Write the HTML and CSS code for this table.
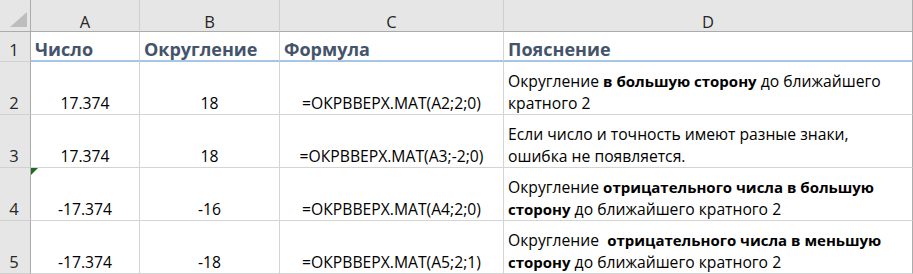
FILE: index.html
```html
<!DOCTYPE html>
<html lang="ru">
<head>
<meta charset="utf-8">
<title>ОКРВВЕРХ.МАТ</title>
<link rel="stylesheet" href="styles.css">
</head>
<body>
<div class="sheet">
  <div class="corner"><svg class="corner-tri" width="17" height="15" viewBox="0 0 17 15"><polygon points="17,0 17,15 0,15" fill="#bdbdbd"/></svg></div>
  <div class="colhead">A</div>
  <div class="colhead">B</div>
  <div class="colhead">C</div>
  <div class="colhead">D</div>

  <div class="rowhead">1</div>
  <div class="cell head">Число</div>
  <div class="cell head">Округление</div>
  <div class="cell head">Формула</div>
  <div class="cell head">Пояснение</div>

  <div class="rowhead">2</div>
  <div class="cell num">17.374</div>
  <div class="cell num">18</div>
  <div class="cell num">=ОКРВВЕРХ.МАТ(A2;2;0)</div>
  <div class="cell text"><p class="wrap">Округление <b>в большую сторону</b> до ближайшего<br>кратного 2</p></div>

  <div class="rowhead">3</div>
  <div class="cell num">17.374</div>
  <div class="cell num">18</div>
  <div class="cell num">=ОКРВВЕРХ.МАТ(A3;-2;0)</div>
  <div class="cell text"><p class="wrap">Если число и точность имеют разные знаки,<br>ошибка не появляется.</p></div>

  <div class="rowhead">4</div>
  <div class="cell num flagged"><span class="flag"></span>-17.374</div>
  <div class="cell num">-16</div>
  <div class="cell num">=ОКРВВЕРХ.МАТ(A4;2;0)</div>
  <div class="cell text"><p class="wrap">Округление <b>отрицательного числа в большую</b><br><b>сторону</b> до ближайшего кратного 2</p></div>

  <div class="rowhead">5</div>
  <div class="cell num">-17.374</div>
  <div class="cell num">-18</div>
  <div class="cell num">=ОКРВВЕРХ.МАТ(A5;2;1)</div>
  <div class="cell text"><p class="wrap">Округление&nbsp; <b>отрицательного числа в меньшую</b><br><b>сторону</b> до ближайшего кратного 2</p></div>
</div>
</body>
</html>
```

FILE: styles.css
```css
html, body {
  margin: 0;
  padding: 0;
  background: #ffffff;
}

.sheet {
  display: grid;
  grid-template-columns: 31px 109px 140px 224px 409px;
  grid-template-rows: 32px 30px 53px 53px 53px 53px;
  font-family: "Open Sans", "Noto Sans", sans-serif;
  font-size: 15.7px;
  color: #000000;
}

.corner {
  background: #e6e6e6;
  border-right: 1px solid #ababab;
  border-bottom: 1px solid #ababab;
  box-sizing: border-box;
  display: flex;
  align-items: flex-end;
  justify-content: flex-end;
  padding: 0 3px 4px 0;
}

.corner-tri {
  display: block;
}

.colhead {
  background: #e6e6e6;
  border-right: 1px solid #d0d0d0;
  border-bottom: 1px solid #ababab;
  box-sizing: border-box;
  display: flex;
  align-items: flex-end;
  justify-content: center;
  line-height: 18px;
  padding-bottom: 0;
  color: #262626;
  font-size: 16.5px;
}

.colhead:nth-child(5) {
  border-right-color: #ababab;
}

.rowhead {
  background: #e6e6e6;
  border-right: 1px solid #ababab;
  border-bottom: 1px solid #d0d0d0;
  box-sizing: border-box;
  display: flex;
  align-items: flex-end;
  justify-content: center;
  line-height: 22px;
  padding: 0 2px 0 0;
  color: #262626;
  font-size: 16.5px;
}

.cell {
  border-right: 1px solid #d4d4d4;
  border-bottom: 1px solid #d4d4d4;
  box-sizing: border-box;
  line-height: 22px;
  padding: 0 4px;
  display: flex;
  align-items: flex-end;
  white-space: nowrap;
}

.sheet > .cell:nth-child(5n) {
  border-right-color: #ababab;
}

.head {
  font-weight: 700;
  color: #44546a;
  border-bottom: 2px solid #a7c6e5;
  font-size: 18px;
}

.num {
  justify-content: center;
  text-align: center;
}

.wrap {
  margin: 0;
}

.wrap b {
  font-weight: 700;
  font-size: 15px;
}

.flagged {
  position: relative;
}

.flag {
  position: absolute;
  left: 0;
  top: 0;
  width: 0;
  height: 0;
  border-top: 7px solid #1e6b1e;
  border-right: 7px solid transparent;
}
```
